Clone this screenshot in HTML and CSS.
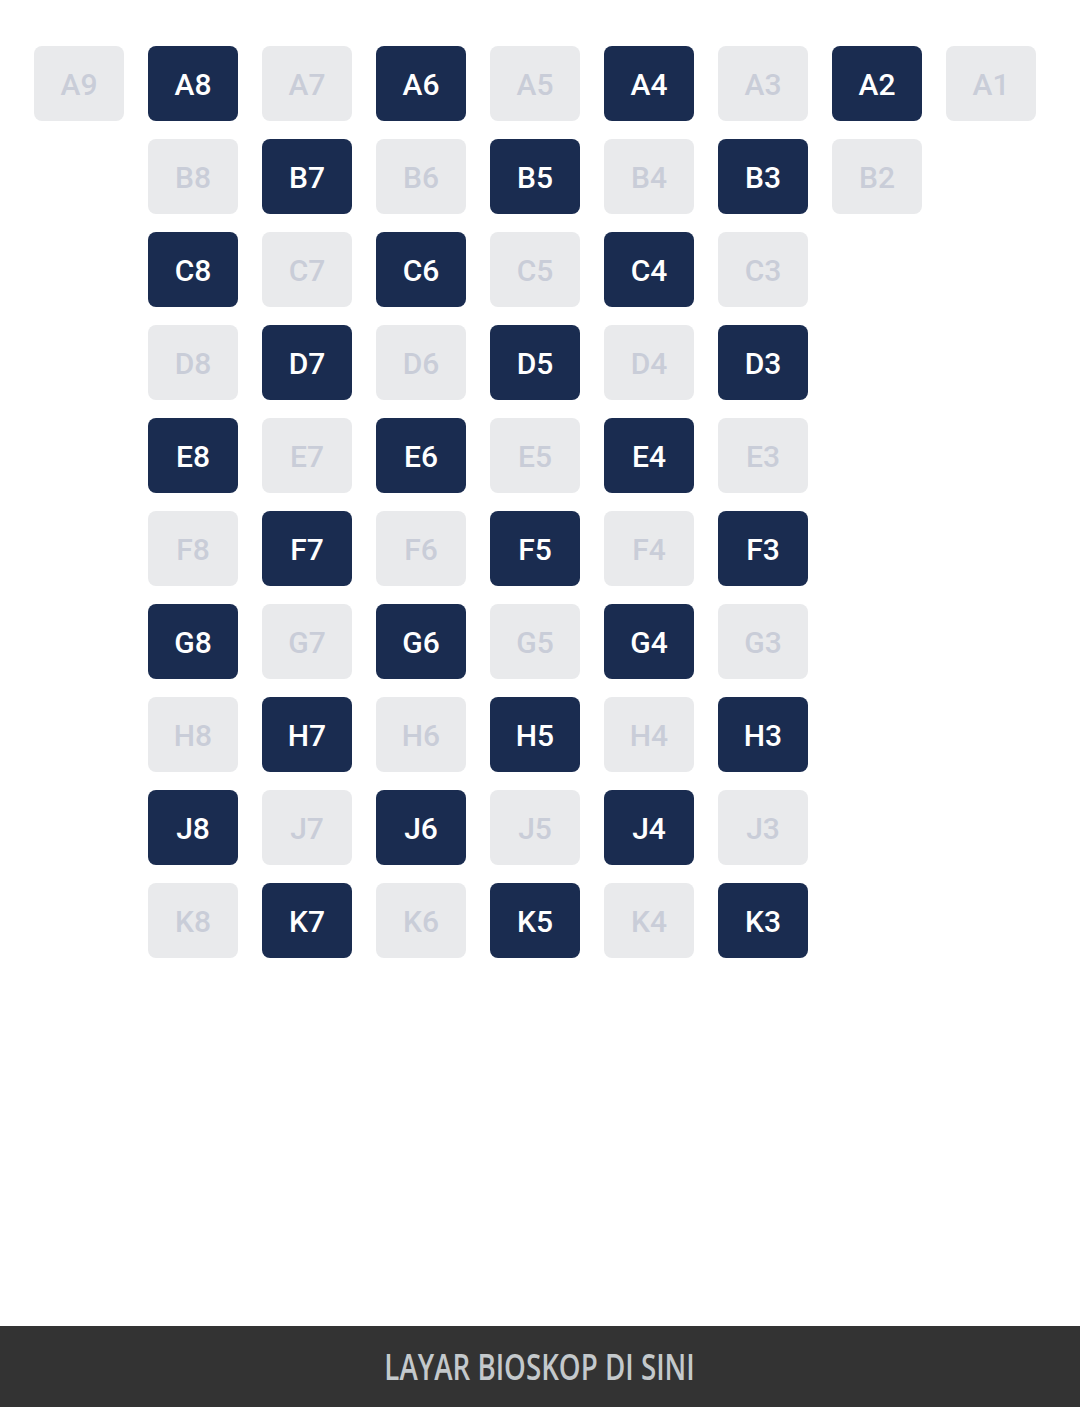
FILE: index.html
```html
<!DOCTYPE html>
<html lang="en">
<head>
  <meta charset="UTF-8">
  <title>Pilih Kursi</title>
  <link rel="stylesheet" href="styles.css">
</head>
<body>
<main class="seats">
  <div class="seat">A9</div>
  <div class="seat taken">A8</div>
  <div class="seat">A7</div>
  <div class="seat taken">A6</div>
  <div class="seat">A5</div>
  <div class="seat taken">A4</div>
  <div class="seat">A3</div>
  <div class="seat taken">A2</div>
  <div class="seat">A1</div>

  <div class="seat first">B8</div>
  <div class="seat taken">B7</div>
  <div class="seat">B6</div>
  <div class="seat taken">B5</div>
  <div class="seat">B4</div>
  <div class="seat taken">B3</div>
  <div class="seat">B2</div>

  <div class="seat first taken">C8</div>
  <div class="seat">C7</div>
  <div class="seat taken">C6</div>
  <div class="seat">C5</div>
  <div class="seat taken">C4</div>
  <div class="seat">C3</div>

  <div class="seat first">D8</div>
  <div class="seat taken">D7</div>
  <div class="seat">D6</div>
  <div class="seat taken">D5</div>
  <div class="seat">D4</div>
  <div class="seat taken">D3</div>

  <div class="seat first taken">E8</div>
  <div class="seat">E7</div>
  <div class="seat taken">E6</div>
  <div class="seat">E5</div>
  <div class="seat taken">E4</div>
  <div class="seat">E3</div>

  <div class="seat first">F8</div>
  <div class="seat taken">F7</div>
  <div class="seat">F6</div>
  <div class="seat taken">F5</div>
  <div class="seat">F4</div>
  <div class="seat taken">F3</div>

  <div class="seat first taken">G8</div>
  <div class="seat">G7</div>
  <div class="seat taken">G6</div>
  <div class="seat">G5</div>
  <div class="seat taken">G4</div>
  <div class="seat">G3</div>

  <div class="seat first">H8</div>
  <div class="seat taken">H7</div>
  <div class="seat">H6</div>
  <div class="seat taken">H5</div>
  <div class="seat">H4</div>
  <div class="seat taken">H3</div>

  <div class="seat first taken">J8</div>
  <div class="seat">J7</div>
  <div class="seat taken">J6</div>
  <div class="seat">J5</div>
  <div class="seat taken">J4</div>
  <div class="seat">J3</div>

  <div class="seat first">K8</div>
  <div class="seat taken">K7</div>
  <div class="seat">K6</div>
  <div class="seat taken">K5</div>
  <div class="seat">K4</div>
  <div class="seat taken">K3</div>
</main>
<footer class="screen"><span class="screen-label">LAYAR BIOSKOP DI SINI</span></footer>
</body>
</html>
```

FILE: styles.css
```css
body {
  margin: 0;
  min-height: 1407px;
  display: flex;
  flex-direction: column;
  background: #fff;
  font-family: Roboto, Arial, sans-serif;
}
.seats {
  flex: 1;
  display: grid;
  grid-template-columns: repeat(9, 90px);
  grid-auto-rows: 75px;
  gap: 18px 24px;
  align-content: start;
  padding: 46px 34px 0;
}
.seat {
  display: flex;
  align-items: center;
  justify-content: center;
  padding-top: 1px;
  border-radius: 8px;
  background: #e9eaec;
  color: #c9cdd8;
  font-size: 30px;
  font-weight: 500;
}
.first {
  grid-column-start: 2;
}
.taken {
  background: #1a2c50;
  color: #fff;
}
.screen {
  height: 81px;
  display: flex;
  align-items: center;
  justify-content: center;
  background: #333;
}
.screen-label {
  color: #c4c9cc;
  font-family: "Open Sans", sans-serif;
  font-size: 36px;
  font-weight: 600;
  white-space: nowrap;
  transform: scaleX(0.77);
}
```
